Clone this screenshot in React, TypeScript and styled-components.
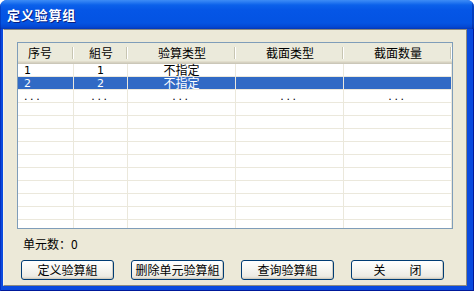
import React from 'react';
import styled, { createGlobalStyle } from 'styled-components';

const GlobalStyle = createGlobalStyle`
  html, body { margin: 0; padding: 0; background: #ffffff; }
  body { font-family: Tahoma, "DejaVu Sans", "Noto Sans CJK SC", sans-serif; }
  #root { width: 474px; height: 291px; }
`;

const Window = styled.div`
  width: 474px;
  height: 291px;
  display: flex;
  flex-direction: column;
  border-radius: 7px 7px 0 0;
  overflow: hidden;
  background: #0a4ade;
`;

const TitleBar = styled.div`
  height: 29px;
  flex: none;
  display: flex;
  align-items: center;
  padding-left: 7px;
  box-sizing: border-box;
  background: linear-gradient(
    to bottom,
    #3d8cf5 0px,
    #2a7cf2 2px,
    #0b61ea 5px,
    #0556e6 10px,
    #0454e4 18px,
    #0554e2 23px,
    #0447d2 27px,
    #0338b8 29px
  );
  box-shadow: inset -2px 0 rgba(0, 20, 120, 0.35), inset 1px 0 rgba(0, 30, 150, 0.4);
`;

const Title = styled.span`
  font-family: "Noto Sans CJK SC", sans-serif;
  font-size: 13px;
  font-weight: 700;
  color: #ffffff;
  letter-spacing: 0.8px;
  text-shadow: 1px 1px 0 #0a1e80;
  line-height: 14px;
`;

const Frame = styled.div`
  flex: 1;
  display: flex;
  padding: 0 7px 5px 3px;
  background: #0a4ade;
  box-shadow: inset 1px 0 #0630c0, inset -1px 0 #00199a, inset 0 -1px #00199a;
`;

const Client = styled.div`
  flex: 1;
  display: flex;
  flex-direction: column;
  background: #ece9d8;
  border-style: solid;
  border-width: 1px;
  border-color: #8c8a80 #8c8a80 #8c8a80 #f4f2e8;
  padding: 12px 13px 0 13px;
`;

const Table = styled.div`
  width: 436px;
  height: 187px;
  box-sizing: border-box;
  border: 1px solid #7f9db9;
  background: #ffffff;
  overflow: hidden;
  flex: none;
`;

const Columns = '56px 54px 108px 108px 108px';

const HeaderRow = styled.div`
  display: grid;
  grid-template-columns: ${Columns};
  height: 21px;
  box-sizing: border-box;
  background: #ebeadb;
  box-shadow: inset 0 -1px #cbc7b8, inset 0 -2px #d6d2c2, inset 0 -3px #e2decd;
`;

const HeaderCell = styled.div<{ $left?: boolean }>`
  position: relative;
  font-family: "Noto Sans CJK SC", sans-serif;
  font-size: 12px;
  line-height: 19px;
  color: #000000;
  text-align: ${(p) => (p.$left ? 'left' : 'center')};
  padding-left: ${(p) => (p.$left ? '10px' : '0')};
  &::after {
    content: '';
    position: absolute;
    right: 1px;
    top: 4px;
    bottom: 5px;
    width: 1px;
    background: #c7c5b2;
    box-shadow: 1px 0 #ffffff;
  }
`;

const Row = styled.div<{ $selected?: boolean }>`
  display: grid;
  grid-template-columns: ${Columns};
  height: 13px;
  box-sizing: border-box;
  border-bottom: 1px solid #ebe8dc;
  background: ${(p) => (p.$selected ? '#316ac5' : '#ffffff')};
  color: ${(p) => (p.$selected ? '#ffffff' : '#000000')};
`;

const Cell = styled.div<{ $left?: boolean }>`
  border-right: 1px solid #ebe8dc;
  height: 12px;
  font-size: 12px;
  line-height: 12px;
  white-space: nowrap;
  text-align: ${(p) => (p.$left ? 'left' : 'center')};
  padding-left: ${(p) => (p.$left ? '6px' : '0')};
`;

const Num = styled.span`
  font-family: "DejaVu Sans", sans-serif;
  font-size: 11px;
  line-height: 12px;
`;

const CjkText = styled.span`
  display: inline-block;
  height: 12px;
  font-family: "Noto Sans CJK SC", sans-serif;
  font-size: 12px;
  line-height: 12px;
  vertical-align: top;
`;

const Dots = styled.span`
  font-family: "DejaVu Sans", sans-serif;
  font-size: 11px;
  line-height: 12px;
  letter-spacing: 2.6px;
`;

const CountLabel = styled.div`
  margin: 8px 0 0 6px;
  height: 14px;
  font-family: "Noto Sans CJK SC", sans-serif;
  font-size: 12px;
  line-height: 14px;
  color: #000000;
`;

const ButtonRow = styled.div`
  display: flex;
  gap: 17px;
  margin: 9px 0 0 4px;
`;

const Button = styled.button`
  width: 93px;
  height: 20px;
  box-sizing: border-box;
  padding: 0;
  border: 1px solid #003c74;
  border-radius: 3px;
  background: linear-gradient(to bottom, #ffffff 0%, #f7f7f3 40%, #ecebe4 85%, #d6d0c5 100%);
  box-shadow: inset -1px -1px 0 #d0ccc0;
  font-family: "Noto Sans CJK SC", sans-serif;
  font-size: 12px;
  line-height: 16px;
  color: #000000;
  white-space: pre;
`;

type RowData = { no: string; group: string; check: string; sec: string; count: string };

const rows: RowData[] = [
  { no: '1', group: '1', check: '不指定', sec: '', count: '' },
  { no: '2', group: '2', check: '不指定', sec: '', count: '' },
  { no: '...', group: '...', check: '...', sec: '...', count: '...' },
];

const renderText = (t: string) => {
  if (!t) return null;
  if (t === '...') return <Dots>...</Dots>;
  if (/^[0-9]+$/.test(t)) return <Num>{t}</Num>;
  return <CjkText>{t}</CjkText>;
};

export default function App() {
  const blanks = Array.from({ length: 10 });
  return (
    <>
      <GlobalStyle />
      <Window>
        <TitleBar>
          <Title>定义验算组</Title>
        </TitleBar>
        <Frame>
          <Client>
            <Table>
              <HeaderRow>
                <HeaderCell $left>序号</HeaderCell>
                <HeaderCell>組号</HeaderCell>
                <HeaderCell>验算类型</HeaderCell>
                <HeaderCell>截面类型</HeaderCell>
                <HeaderCell>截面数量</HeaderCell>
              </HeaderRow>
              {rows.map((r, i) => (
                <Row key={i} $selected={i === 1}>
                  <Cell $left>{renderText(r.no)}</Cell>
                  <Cell>{renderText(r.group)}</Cell>
                  <Cell>{renderText(r.check)}</Cell>
                  <Cell>{renderText(r.sec)}</Cell>
                  <Cell>{renderText(r.count)}</Cell>
                </Row>
              ))}
              {blanks.map((_, i) => (
                <Row key={`b${i}`}>
                  <Cell $left />
                  <Cell />
                  <Cell />
                  <Cell />
                  <Cell />
                </Row>
              ))}
            </Table>
            <CountLabel>单元数：0</CountLabel>
            <ButtonRow>
              <Button>定义验算組</Button>
              <Button>删除单元验算組</Button>
              <Button>查询验算組</Button>
              <Button>{'关　　闭'}</Button>
            </ButtonRow>
          </Client>
        </Frame>
      </Window>
    </>
  );
}
